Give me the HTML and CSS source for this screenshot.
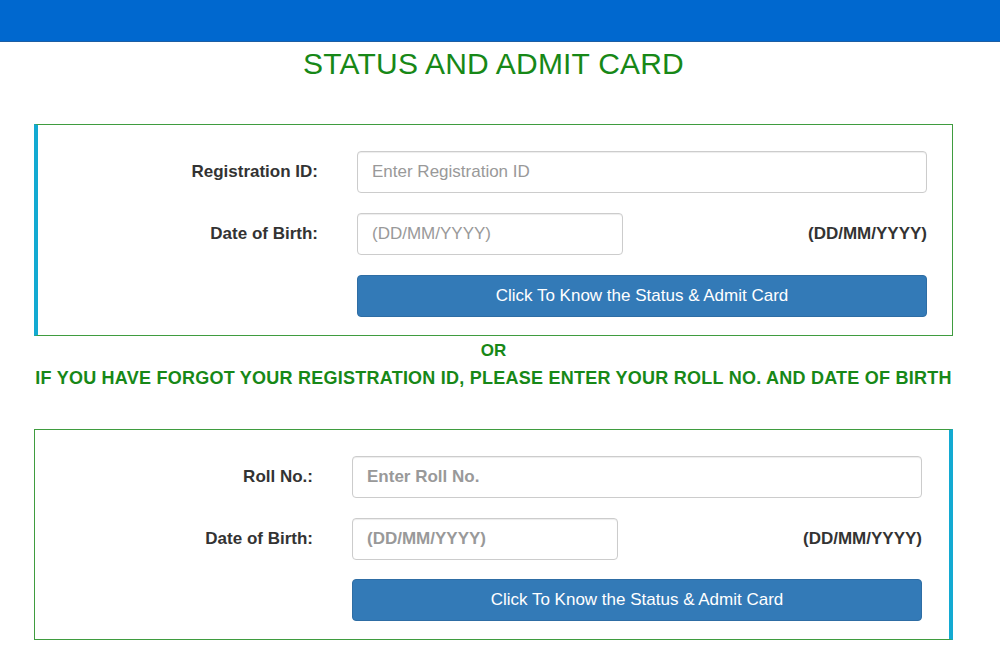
FILE: index.html
```html
<!DOCTYPE html>
<html lang="en">
<head>
<meta charset="utf-8">
<title>Status and Admit Card</title>
<link rel="stylesheet" href="styles.css">
</head>
<body>
<header class="topbar"></header>
<main class="wrap">
  <h1 class="title">STATUS AND ADMIT CARD</h1>

  <form class="card card-left">
    <div class="row">
      <label class="lbl">Registration ID:</label>
      <input class="field" type="text" placeholder="Enter Registration ID">
    </div>
    <div class="row">
      <label class="lbl">Date of Birth:</label>
      <div class="dob">
        <input class="field field-short" type="text" placeholder="(DD/MM/YYYY)">
        <span class="hint">(DD/MM/YYYY)</span>
      </div>
    </div>
    <div class="row">
      <span></span>
      <button class="btn" type="button">Click To Know the Status &amp; Admit Card</button>
    </div>
  </form>

  <p class="or">OR</p>
  <p class="note">IF YOU HAVE FORGOT YOUR REGISTRATION ID, PLEASE ENTER YOUR ROLL NO. AND DATE OF BIRTH</p>

  <form class="card card-right">
    <div class="row">
      <label class="lbl">Roll No.:</label>
      <input class="field field-bold" type="text" placeholder="Enter Roll No.">
    </div>
    <div class="row">
      <label class="lbl">Date of Birth:</label>
      <div class="dob">
        <input class="field field-short field-bold" type="text" placeholder="(DD/MM/YYYY)">
        <span class="hint">(DD/MM/YYYY)</span>
      </div>
    </div>
    <div class="row">
      <span></span>
      <button class="btn" type="button">Click To Know the Status &amp; Admit Card</button>
    </div>
  </form>
</main>
</body>
</html>
```

FILE: styles.css
```css
* { box-sizing: border-box; }

html, body {
  margin: 0;
  padding: 0;
  background: #ffffff;
  font-family: "Liberation Sans", Arial, sans-serif;
  color: #333333;
}

.topbar {
  height: 42px;
  background: #0068cf;
  border-bottom: 1px solid #1d5ea3;
}

.wrap {
  width: 919px;
  margin-left: 34px;
}

.title {
  margin: 5px 0 0;
  font-size: 30px;
  line-height: 34px;
  font-weight: normal;
  letter-spacing: 0.2px;
  color: #178817;
  text-align: center;
}

.card {
  display: flex;
  flex-direction: column;
  gap: 20px;
  border: 1px solid #3f9c3f;
}

.card-left {
  margin-top: 43px;
  border-left: 4px solid #13aad2;
  padding: 26px 25px 18px 0;
}

.card-right {
  margin-top: 41px;
  border-right: 4px solid #13aad2;
  padding: 26px 27px 18px 0;
}

.card-right .row:last-child { margin-top: -1px; }

.row {
  display: grid;
  grid-template-columns: 1fr 570px;
  column-gap: 39px;
  align-items: center;
}

.lbl {
  text-align: right;
  font-size: 17px;
  font-weight: bold;
  color: #333333;
}

.field {
  height: 42px;
  width: 100%;
  border: 1px solid #cccccc;
  border-radius: 4px;
  padding: 0 14px;
  font-family: "Liberation Sans", Arial, sans-serif;
  font-size: 17px;
  color: #555555;
  box-shadow: inset 0 1px 1px rgba(0,0,0,0.075);
  outline: none;
}

.field::placeholder { color: #999999; opacity: 1; }

.field-bold::placeholder { font-weight: bold; }

.field-short { width: 266px; }

.dob {
  display: flex;
  justify-content: space-between;
  align-items: center;
}

.hint {
  font-size: 17px;
  font-weight: bold;
  color: #333333;
}

.btn {
  height: 42px;
  width: 100%;
  background: #337ab7;
  border: 1px solid #2e6da4;
  border-radius: 4px;
  color: #ffffff;
  font-family: "Liberation Sans", Arial, sans-serif;
  font-size: 17px;
  padding: 0;
}

.or {
  margin: 5px 0 0;
  text-align: center;
  font-size: 17px;
  line-height: 20px;
  font-weight: bold;
  color: #178817;
}

.note {
  margin: 7px 0 0;
  text-align: center;
  font-size: 18px;
  line-height: 20px;
  font-weight: bold;
  letter-spacing: 0.24px;
  color: #178817;
  white-space: nowrap;
}
```
